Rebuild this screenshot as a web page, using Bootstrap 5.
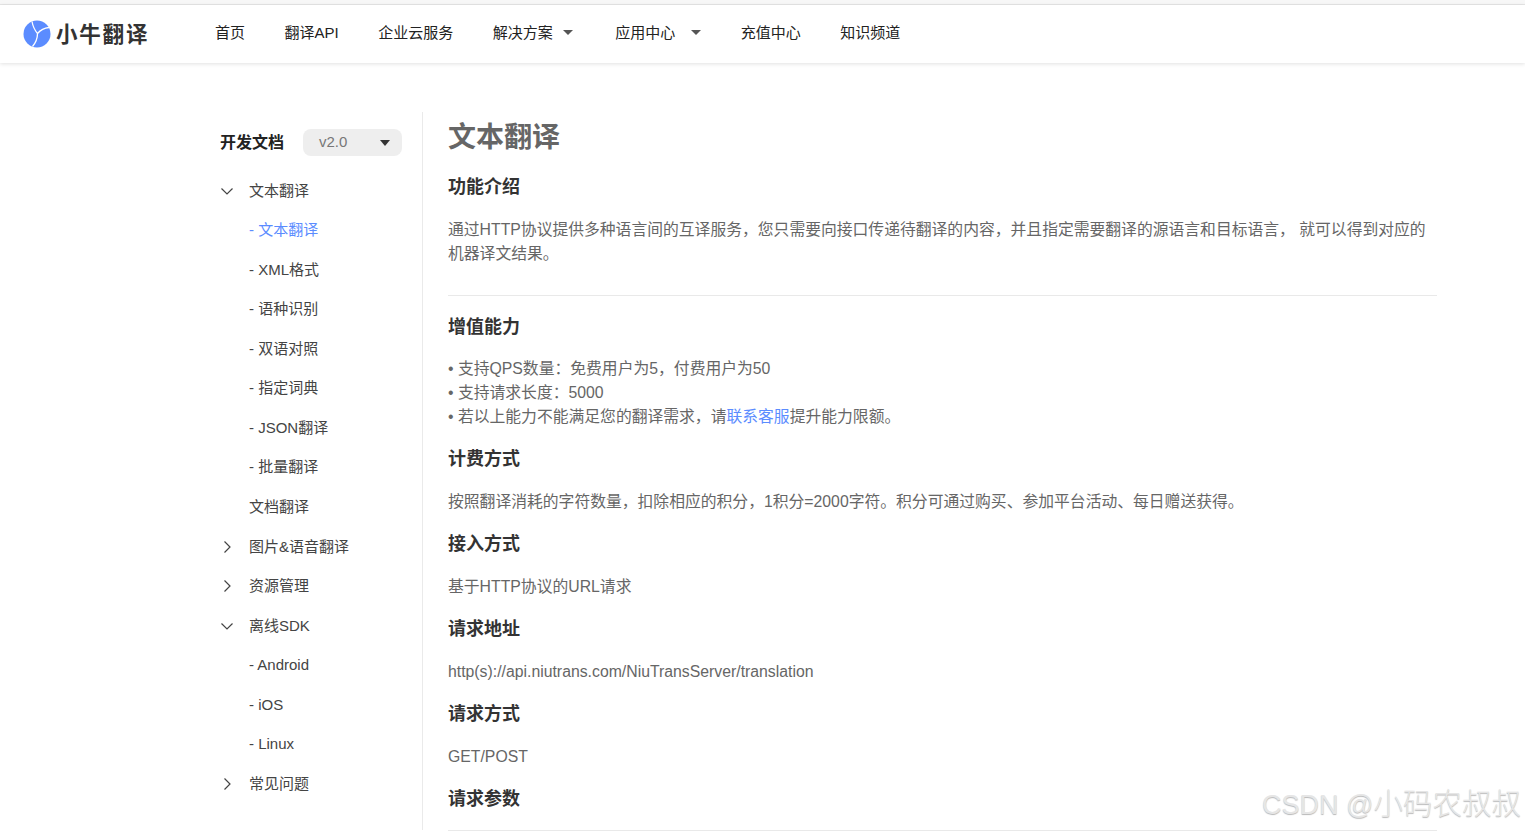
<!DOCTYPE html>
<html lang="zh-CN">
<head>
<meta charset="utf-8">
<title>文本翻译</title>
<link rel="stylesheet" href="https://cdn.jsdelivr.net/npm/bootstrap@5.3.0/dist/css/bootstrap.min.css">
<style>
html,body{height:831px;overflow:hidden}
body{font-family:"Liberation Sans","Noto Sans CJK SC",sans-serif;background:#fff;color:#666;font-size:16px;position:relative}
.top-strip{background:#f7f7f7;border-bottom:1px solid #e6e6e6;height:5px}
.site-head{height:58px;background:#fff;box-shadow:0 1px 4px rgba(0,0,0,.12);padding-left:23px}
.brand{width:192px;gap:5px;text-decoration:none}
.brand-name{font-size:21.500px;font-weight:700;letter-spacing:1.800px;color:#333;line-height:1;margin-top:3px}
.site-nav{gap:39.500px;font-size:15px;color:#222;margin-top:-2px}
.site-nav a{color:#222;text-decoration:none;white-space:nowrap}
.tri{display:inline-block;width:0;height:0;border:5px solid transparent;border-top:5px solid #555;border-bottom:0;vertical-align:middle;margin-left:10px;margin-right:3px;position:relative;top:-1px}
.tri.wide{margin-left:16px;margin-right:0}
.page-wrap{padding-left:220px;padding-top:49px}
.side{width:203px;border-right:1px solid #eaeaea;height:718px;flex:none}
.side-head{height:33px;margin-top:14px;gap:19px;margin-bottom:12px}
.side-title{font-size:16px;font-weight:700;color:#222}
.ver{width:99px;height:27px;background:#eee;border-radius:8px;color:#777;font-size:15px;padding:0 12px 0 16px}
.ver i{border:5px solid transparent;border-top:6px solid #333;border-bottom:0;width:0;height:0;display:block}
.tree{font-size:15px;color:#444;list-style:none;margin:0;padding:0}
.tree li{height:39.570px;display:flex;align-items:center;white-space:nowrap}
.tree .ico{width:29px;flex:none;display:flex}
.tree .sub{padding-left:29px}
.tree .on{color:#5b8cff}
.main-col{width:989px;margin-left:25px;flex:none;font-size:15.800px}
.main-col h1{font-size:28px;font-weight:700;color:#666;margin:3px 0 0;line-height:46px}
.main-col h2{font-size:18px;font-weight:700;color:#333;margin:0;line-height:24px}
.main-col p{margin:0;line-height:24px;color:#666}
.main-col a{color:#5b8cff;text-decoration:none}
.main-col hr{margin:0;border:0;border-top:1px solid #e9e9e9;opacity:1}
.main-col .first-h{margin-top:14px}
.main-col .first-p{margin-top:19px}
.main-col .list-p{margin-top:18px}
.main-col .sep-a{margin-top:29px}
.main-col .sec-b{margin-top:19px}
.main-col .sec-c{margin-top:18px}
.main-col .sec-p{margin-top:19px}
.main-col .sep-b{margin-top:19px}
.mark-w{position:absolute;right:4px;bottom:12px;font-size:27px;font-weight:300;color:#e6e6e6;line-height:1;text-shadow:0 1px 1px rgba(0,0,0,.28);white-space:nowrap}
.mark-w span{font-size:29.500px}
</style>
</head>
<body>
<div class="top-strip"></div>
<header class="site-head d-flex align-items-center">
  <a class="brand d-flex align-items-center" href="#">
    <svg width="28" height="28" viewBox="0 0 28 28"><circle cx="14" cy="14" r="13.5" fill="#5b8cff"/><path d="M9 1.5C10 7 12 10.5 14.5 13.5C17 10.5 20.500 8 26 7.500M14.500 13.500C14.500 18 12.500 23 9.500 26.500" fill="none" stroke="#fff" stroke-width="1.300"/></svg>
    <span class="brand-name">小牛翻译</span>
  </a>
  <nav class="site-nav d-flex align-items-center">
    <a href="#">首页</a>
    <a href="#">翻译API</a>
    <a href="#">企业云服务</a>
    <a href="#">解决方案<span class="tri"></span></a>
    <a href="#">应用中心<span class="tri wide"></span></a>
    <a href="#">充值中心</a>
    <a href="#">知识频道</a>
  </nav>
</header>
<div class="page-wrap d-flex">
  <aside class="side">
    <div class="side-head d-flex align-items-center">
      <span class="side-title">开发文档</span>
      <div class="ver d-flex align-items-center justify-content-between"><span>v2.0</span><i></i></div>
    </div>
    <ul class="tree">
      <li><span class="ico"><svg width="14" height="14" viewBox="0 0 14 14"><path d="M1.500 4.500L7 10L12.500 4.500" fill="none" stroke="#444" stroke-width="1.200"/></svg></span>文本翻译</li>
      <li class="sub on">- 文本翻译</li>
      <li class="sub">- XML格式</li>
      <li class="sub">- 语种识别</li>
      <li class="sub">- 双语对照</li>
      <li class="sub">- 指定词典</li>
      <li class="sub">- JSON翻译</li>
      <li class="sub">- 批量翻译</li>
      <li class="sub">文档翻译</li>
      <li><span class="ico"><svg width="14" height="14" viewBox="0 0 14 14"><path d="M4.500 1.500L10 7L4.500 12.500" fill="none" stroke="#444" stroke-width="1.200"/></svg></span>图片&amp;语音翻译</li>
      <li><span class="ico"><svg width="14" height="14" viewBox="0 0 14 14"><path d="M4.500 1.500L10 7L4.500 12.500" fill="none" stroke="#444" stroke-width="1.200"/></svg></span>资源管理</li>
      <li><span class="ico"><svg width="14" height="14" viewBox="0 0 14 14"><path d="M1.500 4.500L7 10L12.500 4.500" fill="none" stroke="#444" stroke-width="1.200"/></svg></span>离线SDK</li>
      <li class="sub">- Android</li>
      <li class="sub">- iOS</li>
      <li class="sub">- Linux</li>
      <li><span class="ico"><svg width="14" height="14" viewBox="0 0 14 14"><path d="M4.500 1.500L10 7L4.500 12.500" fill="none" stroke="#444" stroke-width="1.200"/></svg></span>常见问题</li>
    </ul>
  </aside>
  <main class="main-col">
    <h1>文本翻译</h1>
    <h2 class="first-h">功能介绍</h2>
    <p class="first-p">通过HTTP协议提供多种语言间的互译服务，您只需要向接口传递待翻译的内容，并且指定需要翻译的源语言和目标语言， 就可以得到对应的机器译文结果。</p>
    <hr class="sep-a">
    <h2 class="sec-b">增值能力</h2>
    <p class="list-p">• 支持QPS数量：免费用户为5，付费用户为50<br>• 支持请求长度：5000<br>• 若以上能力不能满足您的翻译需求，请<a href="#">联系客服</a>提升能力限额。</p>
    <h2 class="sec-c">计费方式</h2>
    <p class="sec-p">按照翻译消耗的字符数量，扣除相应的积分，1积分=2000字符。积分可通过购买、参加平台活动、每日赠送获得。</p>
    <h2 class="sec-c">接入方式</h2>
    <p class="sec-p">基于HTTP协议的URL请求</p>
    <h2 class="sec-c">请求地址</h2>
    <p class="sec-p">http(s)://api.niutrans.com/NiuTransServer/translation</p>
    <h2 class="sec-c">请求方式</h2>
    <p class="sec-p">GET/POST</p>
    <h2 class="sec-c">请求参数</h2>
    <hr class="sep-b">
  </main>
</div>
<div class="mark-w">CSDN @<span>小码农叔叔</span></div>
</body>
</html>
